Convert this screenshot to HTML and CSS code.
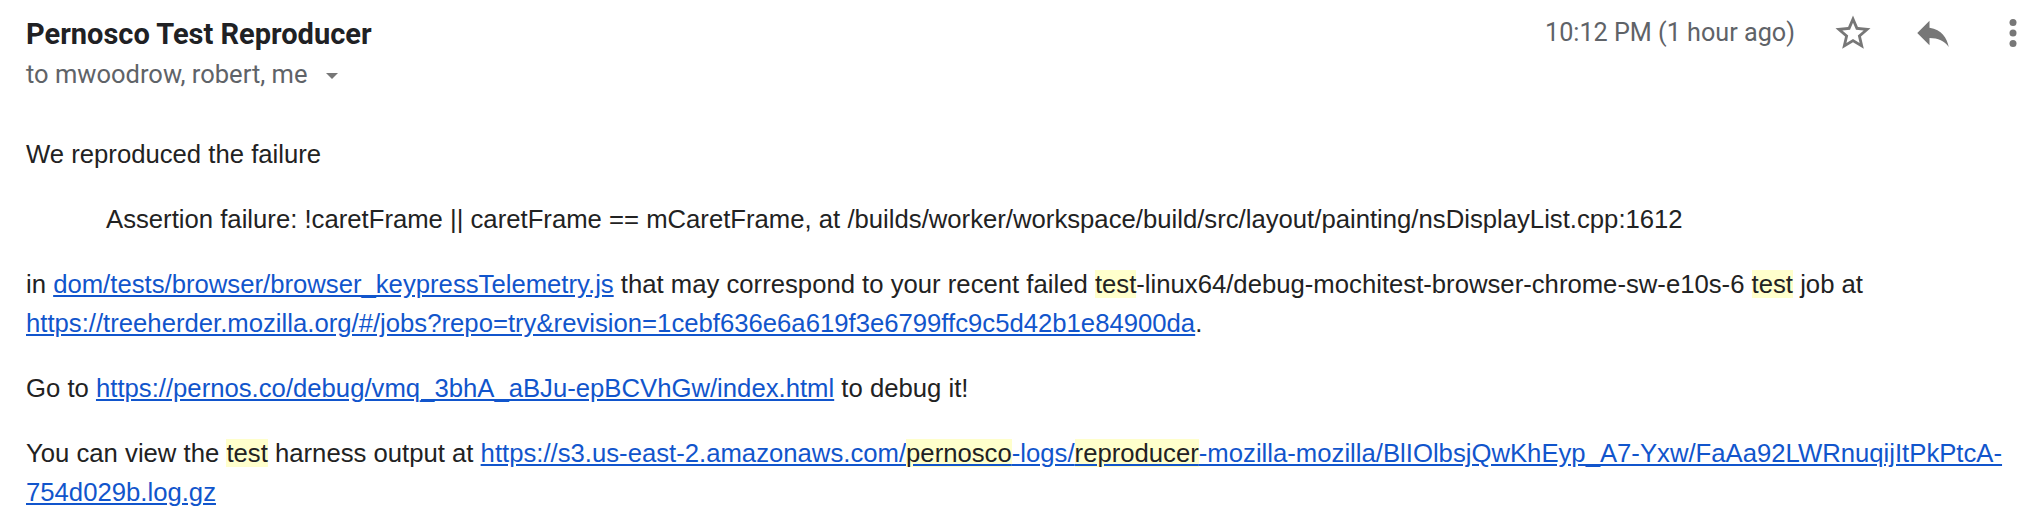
FILE: index.html
```html
<!DOCTYPE html>
<html>
<head>
<meta charset="utf-8">
<title>Pernosco Test Reproducer</title>
<link rel="stylesheet" href="styles.css">
</head>
<body>
<div class="message">
	<div class="header">
		<div class="headline">
			<h2 class="subject">Pernosco Test Reproducer</h2>
			<div class="recipients">to mwoodrow, robert, me <span class="caret"></span></div>
		</div>
		<div class="meta">
			<span class="date">10:12 PM (1 hour ago)</span>
			<span class="icon"><svg viewBox="0 0 24 24"><path d="M22 9.24l-7.19-.62L12 2 9.19 8.63 2 9.24l5.460 4.73L5.82 21 12 17.27 18.18 21l-1.63-7.03L22 9.24zM12 15.4l-3.76 2.27 1-4.28-3.32-2.88 4.38-.38L12 6.1l1.71 4.04 4.38.38-3.32 2.88 1 4.28L12 15.4z"/></svg></span>
			<span class="icon"><svg viewBox="0 0 24 24"><path d="M10 9V5l-7 7 7 7v-4.1c5 0 8.5 1.6 11 5.1-1-5-4-10-11-11z"/></svg></span>
			<span class="icon"><svg viewBox="0 0 24 24"><circle cx="12" cy="6" r="2"/><circle cx="12" cy="12" r="2"/><circle cx="12" cy="18" r="2"/></svg></span>
		</div>
	</div>
	<div class="body">
		<p>We reproduced the failure</p>
		<blockquote>Assertion failure: !caretFrame || caretFrame == mCaretFrame, at /builds/worker/workspace/build/src/layout/painting/nsDisplayList.cpp:1612</blockquote>
		<p>in <a href="#">dom/tests/browser/browser_keypressTelemetry.js</a> that may correspond to your recent failed <span class="hl">test</span>-linux64/debug-mochitest-browser-chrome-sw-e10s-6 <span class="hl">test</span> job at <a href="#">https://treeherder.mozilla.org/#/jobs?repo=try&amp;revision=1cebf636e6a619f3e6799ffc9c5d42b1e84900da</a>.</p>
		<p>Go to <a href="#">https://pernos.co/debug/vmq_3bhA_aBJu-epBCVhGw/index.html</a> to debug it!</p>
		<p>You can view the <span class="hl">test</span> harness output at <a href="#">https://s3.us-east-2.amazonaws.com/<span class="hl">pernosco</span>-logs/<span class="hl">reproducer</span>-mozilla-mozilla/BlIOlbsjQwKhEyp_A7-Yxw/FaAa92LWRnuqijItPkPtcA-754d029b.log.gz</a></p>
	</div>
</div>
</body>
</html>
```

FILE: styles.css
```css
html{background:#fff;}
body{margin:0; padding:0; overflow:hidden;}
.message{padding:18px 4px 0 26px;}
.header{display:flex; justify-content:space-between; align-items:flex-start;}
.subject{margin:0; font:700 29px/32px Roboto, sans-serif; color:#202124;}
.recipients{margin-top:10px; font:400 25.5px/28px Roboto, sans-serif; color:#5f6368;}
.caret{display:inline-block; margin-left:12px; vertical-align:middle; border-left:6px solid transparent; border-right:6px solid transparent; border-top:6px solid #777;}
.meta{display:flex; align-items:center; margin-top:-6px;}
.date{font:400 25.2px/42px Roboto, sans-serif; color:#5f6368; margin-right:37px;}
.icon{display:block; width:42px; height:42px; margin-left:38px;}
.icon:nth-child(2){margin-left:0;}
.icon svg{display:block; width:42px; height:42px; fill:#777;}
.body{margin-top:47px; padding-right:4px; font:25.7px/39px "Liberation Sans", Arial, sans-serif; color:#222;}
.body p{margin:0 0 26px;}
.body blockquote{margin:0 0 26px 80px;}
.body a{color:#15c; text-decoration:underline;}
.hl{background:#ffc; color:#222;}
```
